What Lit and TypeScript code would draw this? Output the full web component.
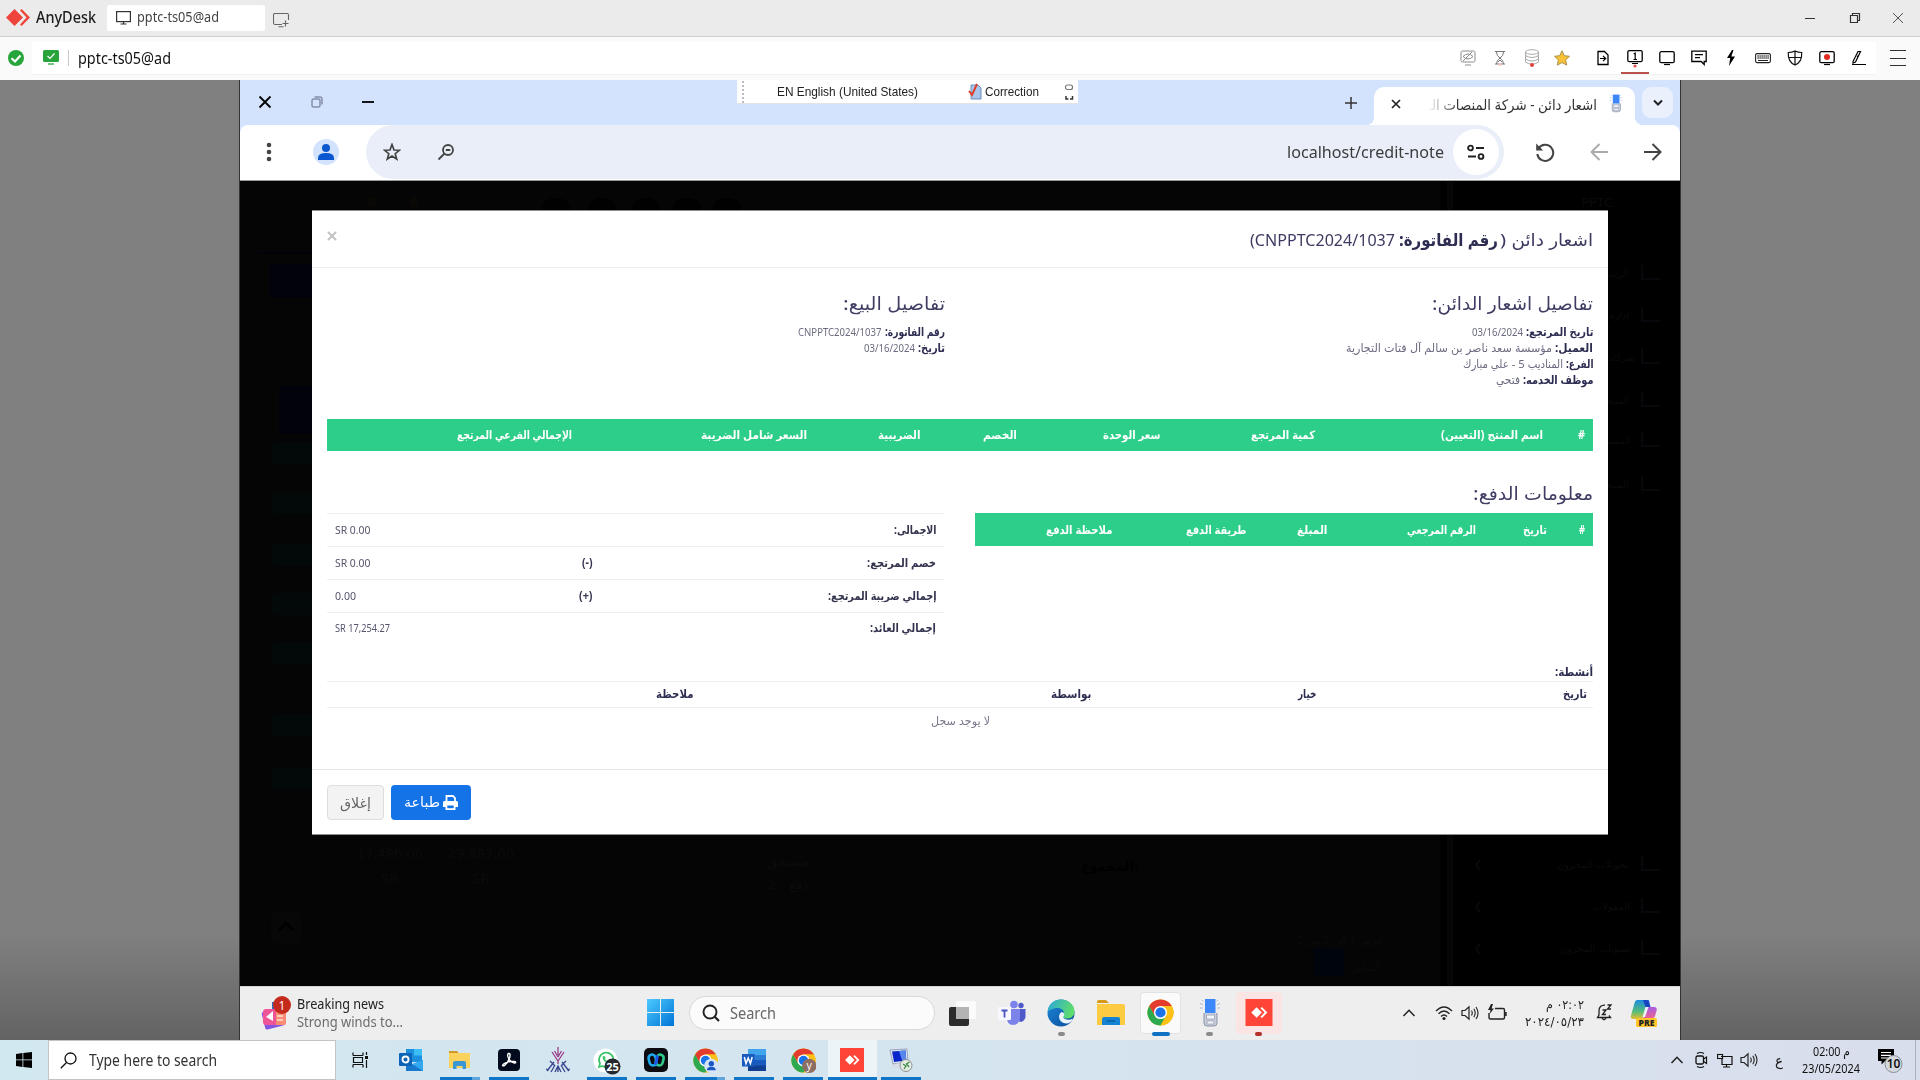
import { LitElement, html, svg, css, TemplateResult, SVGTemplateResult } from "lit";
import { customElement, property } from "lit/decorators.js";

/** One line of text, condensed or widened to fill a given measure. */
@customElement("fit-text")
class FitText extends LitElement {
  @property({ type: Number }) w = 100;
  @property() text = "";
  @property() flow = "auto";
  static styles = css`
    :host { display: block; flex: none; direction: ltr; text-align: left; white-space: nowrap; overflow: visible; }
    span { display: inline-block; transform-origin: 0 50%; white-space: pre; }
  `;
  render() {
    return html`<span dir=${this.flow}>${this.text}</span>`;
  }
  updated() {
    const s = this.renderRoot.querySelector("span") as HTMLElement;
    this.style.width = this.w + "px";
    s.style.transform = "";
    const n = s.getBoundingClientRect().width;
    if (n > 0) s.style.transform = `scaleX(${this.w / n})`;
    s.style.marginRight = this.w - n + "px";
  }
}

const t = (text: string, w: number, cls = "", flow = "auto") =>
  html`<fit-text class=${cls} .w=${w} .text=${text} .flow=${flow}></fit-text>`;

const ic = (w: number, h: number, body: SVGTemplateResult, cls = "") =>
  html`<svg class="ic ${cls}" width=${w} height=${h} viewBox="0 0 ${w} ${h}" fill="none">${body}</svg>`;

/* ---------- shared drawings ---------- */
const anydesk = (w: number, h: number) => html`<svg class="ic" width=${w} height=${h} viewBox="0 0 28 28">
  <rect width="28" height="28" fill="#ff4438"/><path d="M11.500 8.500 17 14 11.500 19.500 6 14z" fill="#fff"/>
  <path d="M15.500 9.500 17 8.200 22.700 14 17 19.800 15.500 18.500 19.800 14z" fill="#fff"/></svg>`;

const chromeBody = svg`
  <circle cx="14" cy="14" r="13.5" fill="#fbc116"/>
  <path d="M2.3 7.2A13.5 13.5 0 0 1 25.7 7.2H14L8.1 17.4z" fill="#e33b2e"/>
  <path d="M2.3 7.2A13.5 13.5 0 0 0 14 27.5L19.9 17.4H8.1z" fill="#2da94f"/>
  <path d="M14 27.5A13.5 13.5 0 0 0 25.7 7.2H14L19.9 17.4z" fill="#fbc116"/>
  <circle cx="14" cy="14" r="6.8" fill="#fff"/><circle cx="14" cy="14" r="5.3" fill="#1a73e8"/>`;
const chrome = (s: number, extra: SVGTemplateResult = svg``) =>
  html`<svg class="ic" width=${s} height=${s} viewBox="0 0 28 28">${chromeBody}${extra}</svg>`;

const phone = (w: number, h: number) => html`<svg class="ic" width=${w} height=${h} viewBox="0 0 22 28" fill="none">
  <path d="M5 14v10q0 3 3 3h7q3 0 3-3V14" fill="#c9cedb" stroke="#8a92a8"/>
  <rect x="6" y="0" width="10.5" height="14" fill="#3c88fb"/><path d="M7.5 16h8v4h-8zM8 22h7v3H8z" fill="#f4f6fb" stroke="#9aa1b5" stroke-width=".8"/>
  <path d="M1 4.500l3 1M1 9h2.500M21 4.500l-3 1M21 9h-2.500M3 1l1.500 1.500M19 1l-1.500 1.500" stroke="#a9b5d3"/></svg>`;

const volume = ic(18, 16, svg`<path d="M1 5.500h3L8 1.800v12.400L4 10.500H1z" stroke="#222" stroke-width="1.200"/>
  <path d="M10.500 5.500q1.500 2.500 0 5M12.800 3.800q2.800 4.200 0 8.400M15 2q4 6 0 12" stroke="#222" stroke-width="1.100"/>`);

const chevronUp = ic(14, 10, svg`<path d="M1.500 8 7 2.300 12.500 8" stroke="#222" stroke-width="1.500"/>`);

/* ---------- toolbar of the remote session ---------- */
const sessionIcons = [
  ic(16, 16, svg`<rect x="1" y="1" width="14" height="11" rx="1.500" stroke="#8c8c8c"/><path d="M5 15h6M3 11 12 2M3 6.500q5-5 10 0-5 5-10 0" stroke="#8c8c8c"/>`),
  ic(16, 16, svg`<path d="M3 1.500h10M3 14h10M4.500 2q0 4 3.500 6-3.500 2-3.500 6M11.500 2q0 4-3.500 6 3.500 2 3.500 6M6 12l2-2 2 2" stroke="#777"/><circle cx="8" cy="14.500" r="1.500" fill="#f6c4c4"/>`),
  ic(16, 18, svg`<ellipse cx="8" cy="3" rx="6.500" ry="2.300" stroke="#aaa"/><path d="M1.500 3v10q6.500 4.500 13 0V3M1.500 6.500q6.500 4 13 0M1.500 10q6.500 4 13 0" stroke="#aaa"/><circle cx="8" cy="16" r="2" fill="#e0413a"/>`),
  ic(16, 16, svg`<path d="M8 .8 10.200 5.700 15.500 6.300 11.600 9.900 12.700 15.100 8 12.500 3.300 15.100 4.400 9.900.5 6.300 5.800 5.700z" fill="#f8c136" stroke="#a99046"/>`),
  ic(16, 16, svg`<path d="M3 1.500h6.500l3.500 3.500v9.500H3z" stroke="#000" stroke-width="1.300"/><path d="M5 8.500h5.500M8 5.800l2.700 2.700L8 11.200" stroke="#000" stroke-width="1.200"/>`),
  ic(16, 20, svg`<rect x=".8" y="2.700" width="14.400" height="11" rx="1.500" stroke="#000" stroke-width="1.300"/><path d="M5 15.500h6M6.700 6 8.200 5v6.500M6.500 11.500h3.500" stroke="#000" stroke-width="1.200"/><circle cx="8" cy="18" r="1.600" fill="#d9534f"/>`),
  ic(16, 16, svg`<rect x=".8" y="1.700" width="14.400" height="11" rx="1.500" stroke="#000" stroke-width="1.300"/><path d="M5 14.500h6" stroke="#000" stroke-width="1.200"/>`),
  ic(16, 16, svg`<path d="M.8 1.200h14.400v10.300h-2v3l-3-3H.8z" stroke="#000" stroke-width="1.300"/><path d="M4 4.700h8M4 7.700h5" stroke="#000" stroke-width="1.200"/>`),
  ic(16, 16, svg`<path d="M9 0 4 8h3.200L6 16l6-9.500H8.300L10.500 0z" fill="#000"/>`),
  ic(16, 16, svg`<rect x=".6" y="3.600" width="14.800" height="9" rx="1.500" stroke="#222" stroke-width="1.100"/><path d="M2.500 6h11.500M2.500 8h11.500" stroke="#222" stroke-width="1.300" stroke-dasharray="1.200 .8"/><path d="M3 10.500h10" stroke="#222"/>`),
  ic(16, 16, svg`<path d="M8 1Q5 2.500 1.300 2.500q-.6 9.500 6.700 12.500Q15.300 12 14.700 2.500 11 2.500 8 1zM8 1v14M1.500 7.500h13" stroke="#111" stroke-width="1.200"/>`),
  ic(16, 16, svg`<rect x=".8" y="1.700" width="14.400" height="11" rx="1.500" stroke="#000" stroke-width="1.300"/><path d="M5 14.500h6" stroke="#000" stroke-width="1.200"/><circle cx="8" cy="7" r="3" fill="#e02b20"/>`),
  ic(16, 16, svg`<path d="M2 11.500 7 1.500h2.500L4.500 12 2 13zM6 6 7.500 7M1 14.500h14" stroke="#000" stroke-width="1.200"/>`),
];

/* ---------- remote taskbar (Windows 11) ---------- */
const remoteApps: Array<[TemplateResult, string]> = [
  [html`<svg class="ic" width="28" height="26" viewBox="0 0 28 26"><rect y="7" width="20" height="19" rx="2" fill="#2c2c2c"/><rect x="7" y="1" width="20" height="18" rx="2" fill="#fbfbfb"/><rect x="7" y="7" width="13" height="12" fill="#b4b4b4"/></svg>`, ""],
  [html`<svg class="ic" width="28" height="26" viewBox="0 0 28 26"><circle cx="16" cy="4.500" r="3.800" fill="#7b83eb"/><circle cx="23" cy="5.500" r="2.700" fill="#5059c9"/><path d="M19 9h8.500v8q-1 5-6 5z" fill="#5059c9"/><path d="M9 9h13v9q-1 7-7 7t-6-7z" fill="#7b83eb"/><rect y="7" width="13" height="13" rx="1" fill="#f7f7ff"/><path d="M3.500 10.500h6M6.500 10.500v7" stroke="#4b53bc" stroke-width="1.800"/></svg>`, ""],
  [html`<svg class="ic" width="28" height="28" viewBox="0 0 28 28"><defs><linearGradient id="e1" x1="0" y1="0" x2="1" y2=".3"><stop stop-color="#2aa7dd"/><stop offset="1" stop-color="#5fdc6c"/></linearGradient><linearGradient id="e2" x1="0" y1="0" x2="1" y2="1"><stop stop-color="#1b8ad8"/><stop offset="1" stop-color="#0c4a9c"/></linearGradient></defs><circle cx="14" cy="14" r="13.500" fill="url(#e2)"/><path d="M.7 12.500C1.500 5 7 .5 14 .5c8 0 13.500 6 13.500 12 0 5-4 7-7.500 7-3 0-5-1.200-3.500-3 2-3-1-7.500-6-7.500-4 0-8 2-9.800 3.500z" fill="url(#e1)"/><path d="M17 16.500q-1.500 2 .5 3.300 4 2.200 8.500-.3-2 5-7 5-7-1-7-7 .5-4 3-4.500 3.500 1 2 3.500z" fill="#eaf5fb"/></svg>`, "run"],
  [html`<svg class="ic" width="28" height="26" viewBox="0 0 28 26"><path d="M0 2q0-2 2-2h7l3 3h-12z" fill="#d59a19"/><path d="M0 4h26q2 0 2 2v19H0z" fill="#fccb41"/><path d="M5 25v-6q0-2 2-2h14q2 0 2 2v6z" fill="#1583d3"/><path d="M10 21h8" stroke="#075a9d" stroke-width="1.300"/></svg>`, ""],
  [chrome(27), "sel"],
  [phone(22, 28), "run"],
  [anydesk(28, 27), "red"],
];

/* ---------- local taskbar (Windows 10) ---------- */
const localApps: Array<[TemplateResult, string]> = [
  [ic(24, 24, svg`<rect x="7" y="1" width="16" height="13" fill="#1d8fdf"/><rect x="15" y="1" width="8" height="6.500" fill="#3cbdf5"/><path d="M7 12l8 5 9-5v11H7z" fill="#1878cb"/><path d="M24 12v11L13 16z" fill="#33a8ee"/><rect y="5" width="13" height="13" rx="1" fill="#0b64b8"/><circle cx="6.500" cy="11.500" r="3" stroke="#fff" stroke-width="1.900"/>`), ""],
  [ic(22, 20, svg`<path d="M0 1h8l2 2.500H0z" fill="#cf9a24"/><path d="M0 3h21v15H0z" fill="#fbd25c"/><path d="M4 19v-6q0-2 2-2h9q2 0 2 2v6h-3.500v-3h-6v3z" fill="#3a97d4"/>`), "on grp"],
  [ic(22, 22, svg`<rect width="22" height="22" rx="4" fill="#020b1d"/><path d="M10.500 4.500q2.500-.5 1 4.500-1.500 4.500-5 7.500-2.300 1-1.800-.5 1.500-2.500 8-3.500 5-.5 5 1 -.5 1.500-4-.5-3.500-3-4-6-.3-2 .8-2.500z" stroke="#fff" stroke-width="1.400"/>`), "on"],
  [ic(26, 26, svg`<path d="M13 0v8M13 13v4M7 5l6 9M19 5l-6 9M9.500 4l3.500 6M16.500 4l-3.500 6" stroke="#96327f" stroke-width="1.200"/><path d="M5 14l5 5M21 14l-5 5M2 24l7-9M6 25l4-7M24 24l-7-9M20 25l-4-7M10 25l3-6 3 6M13 20v5M1 22l3 1M25 22l-3 1" stroke="#37458c" stroke-width="1.300"/>`), ""],
  [ic(28, 28, svg`<circle cx="12.500" cy="13.500" r="12" fill="#fff"/><path d="M6 20l1-3.500a7.200 7.200 0 1 1 2.500 2.500z" stroke="#3ac467" stroke-width="1.700"/><path d="M9.500 9.500q0 5 6 7l2-1.800-2.500-1.400-1 .8q-1.500-.8-2-2l.7-1L11.500 9z" fill="#3ac467"/><circle cx="19.500" cy="19.500" r="8" fill="#23282d"/><text x="19.500" y="23.500" font-size="11" font-weight="700" text-anchor="middle" fill="#fff" font-family="Open Sans, sans-serif">25</text>`, "low"), "on"],
  [ic(24, 24, svg`<rect width="24" height="24" rx="5" fill="#0c0c10"/><rect x="12.200" y="6.500" width="7" height="11" rx="3.500" transform="rotate(14 15.700 12)" stroke="#2fc98c" stroke-width="2.600"/><rect x="5" y="6.500" width="7" height="11" rx="3.500" transform="rotate(-14 8.500 12)" stroke="#1fa8ea" stroke-width="2.600"/><path d="M11.500 15.500q1.500-3 1.700-7" stroke="#1d55ea" stroke-width="2.800" stroke-linecap="round"/>`), "on"],
  [chrome(25, svg`<circle cx="20.500" cy="20" r="8" fill="#d6e4fb"/><circle cx="20.500" cy="17.500" r="3" fill="#1957c2"/><path d="M15.500 25q0-4 5-4t5 4z" fill="#1957c2"/>`), "on grp"],
  [ic(24, 24, svg`<rect x="6" y="1" width="18" height="22" fill="#2b7cd3"/><rect x="6" y="1" width="18" height="6" fill="#41a5ee"/><rect x="6" y="12" width="18" height="11" fill="#185abd"/><rect x="6" y="17.500" width="18" height="5.500" fill="#103f91"/><rect y="6" width="12.500" height="12.500" fill="#185abd"/><path d="M2.300 9l1.700 6.500L6.200 10l2.200 5.500L10.200 9" stroke="#fff" stroke-width="1.500"/>`), "on"],
  [chrome(25, svg`<circle cx="20.500" cy="20" r="8" fill="#8d6e63"/><text x="20.500" y="24" font-size="12" text-anchor="middle" fill="#fff" font-family="Open Sans, sans-serif">y</text>`), "on"],
  [anydesk(24, 24), "on here"],
  [ic(24, 24, svg`<path d="M1 2l17-1 1 13-15 2z" fill="#dfe6f3" stroke="#8692ae" stroke-width=".8"/><path d="M3 3.500l13.500-1 .8 10L5 14z" fill="#0925ca"/><path d="M10 3l6.500-.5.8 10-4 .4z" fill="#5687ee"/><path d="M6 16l6-1 1 3-6 3-4-2z" fill="#d8dde8"/><circle cx="17" cy="17.500" r="6" fill="#e5ece4" stroke="#8b9390"/><path d="M14 16l3 2-2 3M20.500 14l-3 2 2.500 3" stroke="#3e8a47" stroke-width="1.300"/>`), "on"],
];

@customElement("app-root")
class AppRoot extends LitElement {
  static styles = css`
    :host { display: block; width: 1920px; height: 1080px; overflow: hidden; font-family: "Noto Sans", "Open Sans", "DejaVu Sans", sans-serif; font-size: 15px; color: #1c1c1c; }
    * { box-sizing: border-box; }
    .ic { display: block; flex: none; }
    .low { position: relative; top: 1px; }
    .row { display: flex; align-items: center; }
    .grow { flex: 1; }
    .page { display: flex; flex-direction: column; width: 1920px; height: 1080px; }

    /* local window */
    .title { height: 37px; background: #ebebeb; border-bottom: 1px solid #cfcfcf; padding-left: 6px; align-items: flex-start; }
    .brand { margin: 6px 11px 0 6px; font-size: 15.500px; line-height: 22px; font-weight: 500; }
    .title > .logo { margin-top: 9px; }
    .tab { height: 26px; width: 158px; margin-top: 5px; background: #fff; border-radius: 2px; padding-left: 9px; gap: 6px; font-size: 14px; color: #444; }
    .tab fit-text { line-height: 22px; margin-top: -2px; }
    .newtab { margin: 13px 0 0 8px; }
    .wins { height: 36px; gap: 33px; padding-right: 16px; }
    .wins .last { margin-left: -2px; }
    .session { height: 43px; background: #fafafa; padding: 0 14px 1px 8px; }
    .field { height: 33px; width: 1844px; margin-left: 8px; background: #fff; border-bottom: 1px solid #f2f2f2; padding-left: 11px; font-size: 15.500px; color: #111; }
    .bar { width: 1px; height: 16px; background: #c8c8c8; margin: 0 9px; }
    .tools { gap: 16px; align-items: center; padding-right: 9px; }
    .slot { width: 16px; height: 32px; display: flex; align-items: center; justify-content: center; }
    .star { margin: 0 9px 0 -2px; }
    .cur { width: 28px; margin: 0 -6px; border-bottom: 2px solid #b9504c; padding-top: 2px; }
    .menu { margin-left: 14px; }

    .desk { flex: 1; display: flex; justify-content: center; background: linear-gradient(#808080 0 89%, #636363); }
    .screen { width: 1442px; border: solid #333; border-width: 0 1px; display: flex; flex-direction: column; }

    /* remote browser */
    .strip { height: 45px; background: #d3e2fd; position: relative; padding: 0 7px 0 18px; }
    .strip .wctl { gap: 40px; margin: -1px 3px 0 0; }
    .wctl .shift { margin-left: -1px; }
    .lang { align-self: flex-start; width: 342px; height: 24px; margin-left: 360px; background: #fff; border-bottom: 1px solid #e3e3e3; font-family: "Liberation Sans", sans-serif; font-size: 13.500px; color: #222; padding-left: 5px; }
    .dots { width: 1px; height: 22px; border-left: 2px dotted #bbb; margin-right: 33px; }
    .langgap { width: 50px; }
    .check { margin-right: 3px; }
    .plus { margin: 0 17px 0 267px; }
    .btab { align-self: flex-end; width: 261px; height: 38px; border-radius: 10px 10px 0 0; background: #fff; padding: 0 12px 5px 17px; font-size: 14.500px; color: #333; position: relative; }
    .btab fit-text { margin-left: 27px; line-height: 20px; -webkit-mask-image: linear-gradient(90deg, transparent, #000 18%); }
    .btab .fav { margin-left: auto; }
    .foot { position: absolute; bottom: 0; width: 8px; height: 8px; }
    .foot.l { left: -8px; background: radial-gradient(circle at 0 0, transparent 8px, #fff 8px); }
    .foot.r { right: -8px; background: radial-gradient(circle at 100% 0, transparent 8px, #fff 8px); }
    .drop { width: 31px; height: 31px; margin-left: 7px; border-radius: 9px; background: #eaf1fd; justify-content: center; }
    .addr { height: 56px; background: #fff; border-bottom: 1px solid #9a9a9a; padding: 0 18px 1px 26px; border-radius: 8px 8px 0 0; }
    .addrwrap { background: #d3e2fd; }
    .ava { width: 26px; height: 26px; border-radius: 50%; background: #d3e2fd; display: grid; place-items: center; margin-left: 41px; }
    .pill { width: 1138px; height: 54px; border-radius: 27px; background: #e9eef8; margin-left: 27px; padding: 0 5px 0 17px; font-size: 17px; color: #3c3c3c; }
    .pill fit-text { line-height: 24px; }
    .lens { margin-left: 36px; }
    .back { margin: 0 36px 0 35px; }
    .site { width: 46px; height: 46px; margin-left: 9px; border-radius: 50%; background: #fff; display: grid; place-items: center; }

    /* remote page */
    .view { height: 805px; background: #050505; position: relative; }
    .ghost { position: absolute; inset: 0; }
    .modal { position: absolute; left: 72px; top: 29px; width: 1296px; height: 625px; background: #fff; border: solid #8d8d8d; border-width: 1px 0; font-family: "Noto Sans", "DejaVu Sans Condensed", "DejaVu Sans", sans-serif; color: #34345a; }
    .mh { height: 57px; border-bottom: 1px solid #efeff2; padding: 1px 15px 0 15px; justify-content: space-between; }
    .mh .gaprow { gap: 2px; font-size: 17px; line-height: 26px; color: #3c3a60; }
    .mh .x { margin-top: -7px; }
    .body { padding: 0 15px 0 15px; }
    .info { display: grid; grid-template-columns: 617.500px 648.500px; height: 151px; padding-top: 22px; }
    .info > div { display: flex; flex-direction: column; align-items: flex-end; }
    .h { font-size: 18px; line-height: 26px; color: #3f3d63; }
    .kv { display: flex; flex-direction: row-reverse; gap: 3px; font-size: 11.500px; line-height: 15.900px; color: #6a6a80; }
    .kv.first { margin-top: 8px; }
    .b { font-weight: 700; color: #2d2d52; }
    .green { display: grid; direction: rtl; background: #2dce89; color: #fff; font-weight: 700; font-size: 11.500px; align-items: center; line-height: 18px; padding-inline-start: 8px; }
    .g1 { height: 32px; grid-template-columns: 42px 228px 155px 143px 97px 113px 235px 1fr; width: 1266px; }
    .g2 { height: 33px; grid-template-columns: 38px 71px 149px 81px 134px 1fr; width: 618px; }
    .pay { display: grid; grid-template-columns: 617px 618px; gap: 31px; height: 212px; padding-top: 29px; }
    .payr { display: flex; flex-direction: column; align-items: flex-end; }
    .payr .h { margin-bottom: 7px; }
    .tot { margin-top: 33px; }
    .line { height: 33px; border-top: 1px solid #efeff3; padding: 0 8px 1px; font-size: 11.500px; line-height: 18px; color: #55556c; justify-content: space-between; }
    .line:last-child { height: 32px; }
    .vals { width: 257px; display: flex; }
    .line .b { color: #34344f; }
    .actt { display: flex; justify-content: flex-end; font-size: 11.500px; line-height: 18px; }
    .act { direction: rtl; display: grid; grid-template-columns: 271px 225px 398px 1fr; width: 1266px; height: 27px; border: solid #efeff3; border-width: 1px 0; padding: 0 6px 2px 0; align-items: center; font-size: 11.500px; line-height: 18px; }
    .none { display: flex; justify-content: center; font-size: 11.500px; line-height: 18px; color: #77778a; margin-top: 4px; height: 57px; }
    .mf { border-top: 1px solid #e7e7ec; padding: 15px 15px 0; gap: 7px; font-size: 14px; line-height: 20px; }
    .btn { height: 35px; border-radius: 4px; display: flex; align-items: center; justify-content: center; gap: 3px; }
    .close { width: 57px; background: #f3f3f3; border: 1px solid #dedede; color: #666; }
    .print { width: 80px; background: #1573e8; color: #fff; padding-bottom: 1px; }

    /* remote taskbar */
    .rbar { height: 54px; background: #eeeeee; border-top: 1px solid #d5d5d5; padding: 0 0 2px 20px; }
    .news { margin-left: 6px; font-size: 13.500px; line-height: 18px; color: #222; }
    .news .dim { color: #6c6c6c; }
    .win { margin-left: 244px; }
    .find { width: 246px; height: 34px; margin: 0 3px 0 15px; border-radius: 17px; background: #fbfbfb; border: 1px solid #d9d9d9; padding-left: 12px; gap: 10px; font-size: 15.500px; color: #666; }
    .app { width: 49.400px; height: 46px; display: grid; place-items: center; position: relative; }
    .app.sel::before { content: ""; position: absolute; inset: 2px 4px; background: #fafafa; border: 1px solid #e2e2e2; border-radius: 4px; }
    .app.red::before { content: ""; position: absolute; inset: 2px 2px; background: #fae4e4; border-radius: 4px; }
    .app > svg { position: relative; }
    .app::after { position: absolute; bottom: 0; width: 7px; height: 4px; border-radius: 2px; left: 21px; }
    .app.run::after { content: ""; background: #8b8b8b; }
    .app.red::after { content: ""; background: #b3302b; }
    .app.sel::after { content: ""; background: #0f70c4; width: 18px; left: 16px; }
    .rtray { padding-right: 22px; }
    .wifi { margin: 0 8px 0 19px; }
    .batt { margin-left: 8px; }
    .pre { margin-left: 18px; }
    .rtime { display: flex; flex-direction: column; align-items: flex-end; font-family: "DejaVu Sans", sans-serif; font-size: 12.500px; line-height: 17px; color: #222; margin: 0 12px 0 18px; }

    /* local taskbar */
    .lbar { height: 40px; background: linear-gradient(90deg, #d2e8f0, #d5e4ef 55%, #d9deec); }
    .start { margin-left: 16px; }
    .search { width: 288px; height: 40px; margin-left: 16px; background: #fff; border: 1px solid #c4c4c4; padding-left: 11px; gap: 12px; font-size: 15.500px; color: #333; }
    .tv { margin: 0 18.500px 0 16px; }
    .task { width: 49px; height: 40px; display: grid; place-items: center; position: relative; }
    .task.here { background: #ecf4f8; }
    .task > svg { position: relative; }
    .task.on::after { content: ""; position: absolute; bottom: 0; left: 4px; right: 5px; height: 3px; background: #0f75c8; }
    .task.grp::after { background: linear-gradient(90deg, #0f75c8 80%, #60a5dc 80%); }
    .task.here::after { left: 0; right: 0; }
    .cam { margin: 0 9px 0 10px; }
    .vol { margin: 0 17px 0 7px; }
    .ltime { font-size: 12.500px; line-height: 17px; display: flex; flex-direction: column; align-items: center; width: 60px; color: #111; margin-left: 18px; }
    .note { margin-left: 17px; }
    .peek { width: 1px; height: 40px; background: #aab2bf; margin: 0 4px 0 11px; }
  `;

  private kv(k: string, kw: number, v: string, vw: number, cls = "") {
    return html`<div class="kv ${cls}">${t(k, kw, "b")}${t(v, vw)}</div>`;
  }

  private total(k: string, kw: number, sign: string, sw: number, v: string, vw: number) {
    return html`<div class="row line"><div class="vals">${t(v, vw)}<span class="grow"></span>${sign ? t(sign, sw, "b") : ""}</div>${t(k, kw, "b")}</div>`;
  }

  /** The dimmed page behind the dialog. */
  private ghost() {
    const side = [["الرئيسية", 92], ["إدارة", 134], ["شركات", 176], ["المنتجات", 219], ["المشتريات", 259], ["المبيعات", 303], ["تحويلات المخزون", 683], ["المفولات", 725], ["تسويات المخزون", 767]] as Array<[string, number]>;
    return html`<svg class="ghost" width="1440" height="805" viewBox="0 0 1440 805">
      <rect x="1200" width="240" height="805" fill="#000"/><rect x="1207" width="6" height="805" fill="#060606"/>
      <g fill="#02020a"><rect x="17" y="71" width="55" height="2"/><rect x="29" y="83" width="60" height="34"/><rect x="39" y="205" width="60" height="48"/></g>
      ${[274, 324, 376, 425, 474, 546, 599].map((y) => svg`<rect x="32" y=${y - 13} width="44" height="22" rx="4" fill="#030908"/>`)}
      ${[316, 362, 406, 447, 487].map((x) => svg`<rect x=${x - 14} y="17" width="28" height="26" rx="12" fill="#010101"/>`)}
      <g fill="#0a0805"><rect x="128" y="16" width="8" height="10" rx="3"/><rect x="170" y="16" width="8" height="10" rx="3"/></g>
      <g font-family="DejaVu Sans, sans-serif" font-size="13" fill="#0b0b0b" text-anchor="middle">
        <text x="150" y="677">17,486.00</text><text x="150" y="702">SR</text><text x="241" y="677">29,687.00</text><text x="241" y="702">SR</text>
        <text x="870" y="690" font-weight="700" fill="#000">المجموع:</text><text x="548" y="685">مستحق</text><text x="548" y="708">دفع - 2</text>
        <text x="1100" y="763" font-size="10">عرض 1 إلى 2 من 2</text><text x="1126" y="790" font-size="10">السابق</text><text x="1357" y="26">PPTC</text>
        ${side.map(([s, y]) => svg`<text x=${1393 - s.length * 2.7} y=${y + 4} font-size="10">${s}</text><path d="M${1402} ${y - 8}v14h18" fill="none" stroke="#08080c" stroke-width="2"/>`)}
      </g>
      <rect x="31" y="730" width="30" height="32" rx="3" fill="#070707"/><path d="M39 749l7-7 7 7" stroke="#000" stroke-width="3" fill="none"/>
      <rect x="1074" y="767" width="30" height="28" fill="#00040d"/>
      <g stroke="#0a0a0c" stroke-width="2" fill="none"><path d="M1240 679l-4 5 4 5M1240 721l-4 5 4 5M1240 763l-4 5 4 5"/></g>
    </svg>`;
  }

  private modal() {
    return html`<div class="modal">
      <div class="row mh">
        ${ic(10, 10, svg`<path d="M1 1l8 8M9 1l-8 8" stroke="#c4c4c4" stroke-width="2.200"/>`, "x")}
        <div class="row gaprow">${t("CNPPTC2024/1037)", 145, "", "rtl")}<span></span>${t("رقم الفاتورة:", 99, "b")}${t("اشعار دائن (", 93)}</div>
      </div>
      <div class="body">
        <div class="info">
          <div>${t("تفاصيل البيع:", 102, "h")}${this.kv("رقم الفاتورة:", 60, "CNPPTC2024/1037", 83.500, "first")}${this.kv("تاريخ:", 27, "03/16/2024", 51)}</div>
          <div>${t("تفاصيل اشعار الدائن:", 161, "h")}
            ${this.kv("تاريخ المرتجع:", 67.500, "03/16/2024", 51, "first")}
            ${this.kv("العميل:", 38, "مؤسسة سعد ناصر بن سالم آل فتات التجارية", 206)}
            ${this.kv("الفرع:", 27.500, "المناديب 5 - علي مبارك", 100)}
            ${this.kv("موظف الخدمه:", 70.500, "فتحي", 24)}</div>
        </div>
        <div class="green g1">
          ${t("#", 7)}${t("اسم المنتج (التعيين)", 102)}${t("كمية المرتجع", 64)}${t("سعر الوحدة", 57.500)}${t("الخصم", 34)}${t("الضريبية", 42.500)}${t("السعر شامل الضريبة", 106)}${t("الإجمالي الفرعي المرتجع", 115)}
        </div>
        <div class="pay">
          <div class="tot">
            ${this.total("الاجمالى:", 42.500, "", 0, "SR 0.00", 35.500)}
            ${this.total("خصم المرتجع:", 69, "(-)", 10.500, "SR 0.00", 35.500)}
            ${this.total("إجمالي ضريبة المرتجع:", 108.500, "(+)", 13.500, "0.00", 21)}
            ${this.total("إجمالي العائد:", 66, "", 0, "SR 17,254.27", 55)}
          </div>
          <div class="payr">
            ${t("معلومات الدفع:", 120, "h")}
            <div class="green g2">${t("#", 6)}${t("تاريخ", 24)}${t("الرقم المرجعي", 69)}${t("المبلغ", 30.500)}${t("طريقة الدفع", 60.500)}${t("ملاحظة الدفع", 66.500)}</div>
          </div>
        </div>
        <div class="actt">${t("أنشطة:", 38, "b")}</div>
        <div class="act">${t("تاريخ", 24, "b")}${t("خيار", 18.500, "b")}${t("بواسطة", 40.500, "b")}${t("ملاحظة", 37.500, "b")}</div>
        <div class="none">${t("لا يوجد سجل", 59)}</div>
      </div>
      <div class="row mf">
        <div class="btn close">${t("إغلاق", 31)}</div>
        <div class="btn print">${t("طباعة", 36)}${ic(15, 15, svg`<path d="M3.500 6V1h6.500l2 2v3" stroke="#fff" stroke-width="1.800"/><path d="M1.500 6h12Q15 6 15 7.500V12h-2.500v3h-10v-3H0V7.500Q0 6 1.500 6z" fill="#fff"/><path d="M4.300 10.500h6.400v2.700H4.300z" fill="#1573e8"/>`)}</div>
      </div>
    </div>`;
  }

  render() {
    return html`<div class="page">
      <div class="row title">
        ${ic(24, 17, svg`<path d="M8.500 0 17 8.500 8.500 17 0 8.500z" fill="#ef443b"/><path d="M14 1.500 15.700 0 24 8.500 15.700 17 14 15.500 20.500 8.500z" fill="#ef443b"/>`, "logo")}
        ${t("AnyDesk", 60, "brand")}
        <div class="row tab">${ic(15, 14, svg`<rect x=".6" y=".6" width="13.800" height="10" stroke="#333" stroke-width="1.200"/><path d="M7.500 11v2M4.500 13h6" stroke="#333" stroke-width="1.200"/>`)}${t("pptc-ts05@ad", 82)}</div>
        ${ic(17, 15, svg`<path d="M9 11.500H2q-1.500 0-1.500-1.500V2Q.5.500 2 .5h12q1.500 0 1.500 1.500v5M12.500 7.500v6M9.500 10.500h6M5.500 13.800h5" stroke="#666" stroke-width="1.100"/>`, "newtab")}
        <span class="grow"></span>
        <div class="row wins">
          ${ic(12, 12, svg`<path d="M1 6.500h10" stroke="#333"/>`)}
          ${ic(12, 12, svg`<path d="M1.500 3.500h7v7h-7zM3.500 3.500v-2h7v7h-2" stroke="#333" stroke-width="1.200"/>`)}
          ${ic(12, 12, svg`<path d="M1 1l10 10M11 1 1 11" stroke="#555"/>`, "last")}
        </div>
      </div>
      <div class="row session">
        ${ic(16, 16, svg`<circle cx="8" cy="8" r="8" fill="#28a53a"/><path d="M3.500 8.200 7 11.500 12.500 5.500" stroke="#fff" stroke-width="2.200"/>`)}
        <div class="row field">
          ${ic(16, 15, svg`<rect width="16" height="12" rx="1.500" fill="#29a33b"/><path d="M5 14h6" stroke="#29a33b" stroke-width="1.300"/><path d="M4.500 6 7 8.500 11.500 3.500" stroke="#fff" stroke-width="1.200"/>`)}
          <div class="bar"></div>${t("pptc-ts05@ad", 93)}
          <span class="grow"></span>
          <div class="row tools">${sessionIcons.map((i, n) => html`<div class="slot ${n === 5 ? "cur" : n === 3 ? "star" : ""}">${i}</div>`)}</div>
        </div>
        ${ic(16, 18, svg`<path d="M0 1.500h16M0 9.500h16M0 16.500h16" stroke="#333" stroke-width="1.200"/>`, "menu")}
      </div>

      <div class="desk"><div class="screen">
        <div class="row strip">
          <div class="row wctl">
            ${ic(14, 14, svg`<path d="M1.500 1.500l11 11M12.500 1.500l-11 11" stroke="#000" stroke-width="1.800"/>`)}
            ${ic(12, 12, svg`<rect x="1" y="3" width="8" height="8" rx="1.500" stroke="#8590a8" stroke-width="1.500"/><path d="M3.500 1h5.500q2 0 2 2v5.500" stroke="#8590a8" stroke-width="1.500"/>`, "shift")}
            ${ic(12, 12, svg`<path d="M0 6h12" stroke="#000" stroke-width="1.800"/>`, "shift")}
          </div>
          <div class="row lang"><div class="dots"></div>${t("EN English (United States)", 141)}
            <span class="langgap"></span>
            ${ic(14, 18, svg`<path d="M3 2h7l3 3v11H3z" fill="#aac6ea" stroke="#6d8fbd"/><path d="M1 8l3 4L9 1" stroke="#df3c25" stroke-width="1.900"/>`, "check")}
            ${t("Correction", 54)}<span class="grow"></span>
            ${ic(14, 20, svg`<rect x="1.500" y="3" width="7" height="4.500" rx="2" stroke="#777" stroke-width="1.200"/><path d="M2 14v3h2.500M8.500 14v3H6" stroke="#333" stroke-width="1.500"/>`)}
          </div>
          ${ic(12, 12, svg`<path d="M6 0v12M0 6h12" stroke="#333" stroke-width="1.500"/>`, "plus")}
          <div class="row btab"><i class="foot l"></i><i class="foot r"></i>
            ${ic(10, 10, svg`<path d="M1 1l8 8M9 1l-8 8" stroke="#222" stroke-width="1.700"/>`)}
            ${t("اشعار دائن - شركة المنصات الـ", 169)}
            <span class="fav">${phone(14, 19)}</span>
          </div>
          <div class="row drop">${ic(10, 8, svg`<path d="M1 1.500l4 4 4-4" stroke="#222" stroke-width="2"/>`)}</div>
        </div>
        <div class="addrwrap"><div class="row addr">
          ${ic(6, 20, svg`<circle cx="3" cy="3" r="2.300" fill="#444"/><circle cx="3" cy="10" r="2.300" fill="#444"/><circle cx="3" cy="17" r="2.300" fill="#444"/>`)}
          <div class="ava">${ic(16, 16, svg`<circle cx="8" cy="4" r="4" fill="#0b57d0"/><path d="M0 16v-2q0-5 8-5t8 5v2z" fill="#0b57d0"/>`)}</div>
          <div class="row pill">
            ${ic(18, 18, svg`<path d="M9 1.500 11 7 16.500 7.200 12.200 10.700 13.700 16 9 13 4.300 16 5.800 10.700 1.500 7.200 7 7z" stroke="#444" stroke-width="1.700"/>`)}
            ${ic(18, 18, svg`<circle cx="11" cy="7" r="5" stroke="#444" stroke-width="1.800"/><path d="M7.500 10.500 1.500 16.500M8.800 7h4.500" stroke="#444" stroke-width="1.800"/>`, "lens")}
            <span class="grow"></span>${t("localhost/credit-note", 157)}
            <div class="site">${ic(18, 16, svg`<circle cx="3.500" cy="4" r="2.400" stroke="#222" stroke-width="1.900"/><path d="M9 4h8M1 12.500h8" stroke="#222" stroke-width="2"/><circle cx="14" cy="12.500" r="2.400" stroke="#222" stroke-width="1.900"/>`)}</div>
          </div>
          <span class="grow"></span>
          ${ic(20, 20, svg`<path d="M3.500 6.500A8 8 0 1 1 2.300 12" stroke="#444" stroke-width="2"/><path d="M1.200 1.500v7h7z" fill="#444"/>`)}
          ${ic(18, 18, svg`<path d="M18 9H2M9.500 1 1.500 9l8 8" stroke="#aaa" stroke-width="1.900"/>`, "back")}
          ${ic(18, 18, svg`<path d="M0 9h16M8.500 1l8 8-8 8" stroke="#444" stroke-width="2"/>`)}
        </div></div>
        <div class="view">${this.ghost()}${this.modal()}</div>
        <div class="row rbar">
          ${ic(31, 34, svg`<rect x="3" y="14" width="20" height="18" rx="2" fill="#8454e3" transform="rotate(-14 12 22)"/><path d="M12 6h12v10H12z" fill="#2c71c4"/><rect x="3" y="13" width="23" height="16" rx="3" fill="#ee5598"/><path d="M16 13h10v13q0 3-3 3h-7z" fill="#fa8c73"/><path d="M13 15v10l-7-4z" fill="#fff"/><path d="M17 20h6M17 24h6" stroke="#ffe2da" stroke-width="1.500"/><circle cx="22" cy="9" r="9" fill="#c42b1c"/><text x="22" y="13.500" fill="#fff" font-size="12" text-anchor="middle" font-family="Open Sans, sans-serif">1</text>`)}
          <div class="news">${t("Breaking news", 87)}${t("Strong winds to...", 106, "dim")}</div>
          ${ic(27, 27, svg`<defs><linearGradient id="w" x1="0" y1="0" x2="1" y2="1"><stop stop-color="#4ccbff"/><stop offset="1" stop-color="#0073d6"/></linearGradient></defs><path d="M0 0h13v13H0zM14 0h13v13H14zM0 14h13v13H0zM14 14h13v13H14z" fill="url(#w)"/>`, "win")}
          <div class="row find">${ic(18, 18, svg`<circle cx="8" cy="8" r="6.500" stroke="#222" stroke-width="1.900"/><path d="M12.500 12.500 17 17" stroke="#222" stroke-width="2.200"/>`)}${t("Search", 46)}</div>
          ${remoteApps.map(([i, c]) => html`<div class="app ${c}">${i}</div>`)}
          <span class="grow"></span>
          <div class="row rtray">
            ${chevronUp}
            ${ic(18, 16, svg`<path d="M1 6q8-8 16 0M3.500 8.800q5.500-5.500 11 0M6 11.500q3-3 6 0" stroke="#222" stroke-width="1.300"/><circle cx="9" cy="13.500" r="1.600" fill="#222"/>`, "wifi")}
            ${volume}
            ${ic(20, 18, svg`<path d="M8 4.500h8q1.500 0 1.500 1.500v7.500q0 1.500-1.500 1.500H3.500Q2 15 2 13.500V9M19 8v4" stroke="#222" stroke-width="1.400"/><path d="M4 0 1 6h2.500L2.500 10 7 4.500H4.500L6 0z" fill="#222"/>`, "batt")}
            <div class="rtime">${t("٠٢:٠٢ م", 38)}${t("٢٠٢٤/٠٥/٢٣", 59)}</div>
            ${ic(16, 17, svg`<path d="M9 1.200Q3 1 3 7v4l-1.500 2.500h13L13 11.500M6 14q2 3.500 4 0" stroke="#222" stroke-width="1.300"/><path d="M6.500 6h3.500l-3.500 4.500H10M11.500 1H15l-3.500 4H15" stroke="#222" stroke-width="1.300"/>`)}
            ${ic(28, 28, svg`<defs><linearGradient id="cp" x1="0" y1="0" x2="0" y2="1"><stop stop-color="#1a8be0"/><stop offset=".6" stop-color="#55bd7b"/><stop offset="1" stop-color="#e6bd32"/></linearGradient><linearGradient id="cq" x1="0" y1="0" x2="0" y2="1"><stop stop-color="#a65ce4"/><stop offset="1" stop-color="#f2648b"/></linearGradient></defs><path d="M7 1h11q2 0 1 2.500l-4.500 13Q13 20 9 20H3q-3 0-2-3.500L4.500 4Q5.300 1 7 1z" fill="url(#cp)"/><path d="M13 1h4q2 0 2.500 3l1 4h-5z" fill="#1746c2"/><path d="M17 8h7q3.500 0 2.500 4L25 17q-1 3-5 3h-7l3-10z" fill="url(#cq)"/><path d="M15.500 8h3l-3.500 10h-2.500z" fill="#eef3f7"/><rect x="6" y="19" width="21" height="9" rx="1.500" fill="#ffc627"/><text x="16.500" y="26.500" font-size="8.500" font-weight="800" text-anchor="middle" fill="#222" font-family="Open Sans, sans-serif">PRE</text>`, "pre")}
          </div>
        </div>
      </div></div>

      <div class="row lbar">
        ${ic(16, 16, svg`<path d="M0 2 6.500 1v6.500H0zM7.300.9 16 0v7.500H7.300zM0 8.300h6.500V15L0 14zM7.300 8.300H16V16l-8.700-1z" fill="#000"/>`, "start")}
        <div class="row search">${ic(17, 17, svg`<circle cx="10.500" cy="6.500" r="5.500" stroke="#111" stroke-width="1.300"/><path d="M6.500 10.500.8 16.200" stroke="#111" stroke-width="1.300"/>`)}${t("Type here to search", 128)}</div>
        ${ic(16, 16, svg`<path d="M1 3.500V.5M11 3.500V.5M1 3.500h10M1 12.500h10M1 12.500v3M11 12.500v3M1.500 5.500h9v5h-9zM14.500 0v3M14.500 8v8" stroke="#111" stroke-width="1.200"/><rect x="13" y="4" width="3" height="3" fill="#111"/>`, "tv")}
        ${localApps.map(([i, c]) => html`<div class="task ${c}">${i}</div>`)}
        <span class="grow"></span>
        ${chevronUp}
        ${ic(14, 18, svg`<rect x="2" y="5" width="7.500" height="8" rx="1.500" stroke="#111" stroke-width="1.300"/><path d="M9.500 8 12.500 6v6.500l-3-2M3 2.500q3.500-2 7 0M3 15.500q3.500 2 7 0" stroke="#111" stroke-width="1.200"/>`, "cam")}
        ${ic(16, 15, svg`<path d="M4 3.500h11v8H5v-6M9.500 11.500v2.500M6 14h7" stroke="#111" stroke-width="1.200"/><rect x=".6" y="1.500" width="5" height="4" stroke="#111" stroke-width="1.100"/>`)}
        <div class="vol">${volume}</div>
        ${t("ع", 8)}
        <div class="ltime">${t("02:00 م", 37, "", "ltr")}${t("23/05/2024", 58)}</div>
        ${ic(26, 26, svg`<path d="M0 2h16v12h-9l-3.500 3.500V14H0z" fill="#000"/><path d="M3 5.500h10M3 8.300h10M3 11h7" stroke="#fff" stroke-width="1.200"/><circle cx="15.500" cy="17" r="8.500" fill="#d5d8df" stroke="#8a8f97"/><text x="15.500" y="21.300" font-size="12" font-weight="600" text-anchor="middle" fill="#111" font-family="Noto Sans, sans-serif">10</text>`, "note")}
        <div class="peek"></div>
      </div>
    </div>`;
  }
}
